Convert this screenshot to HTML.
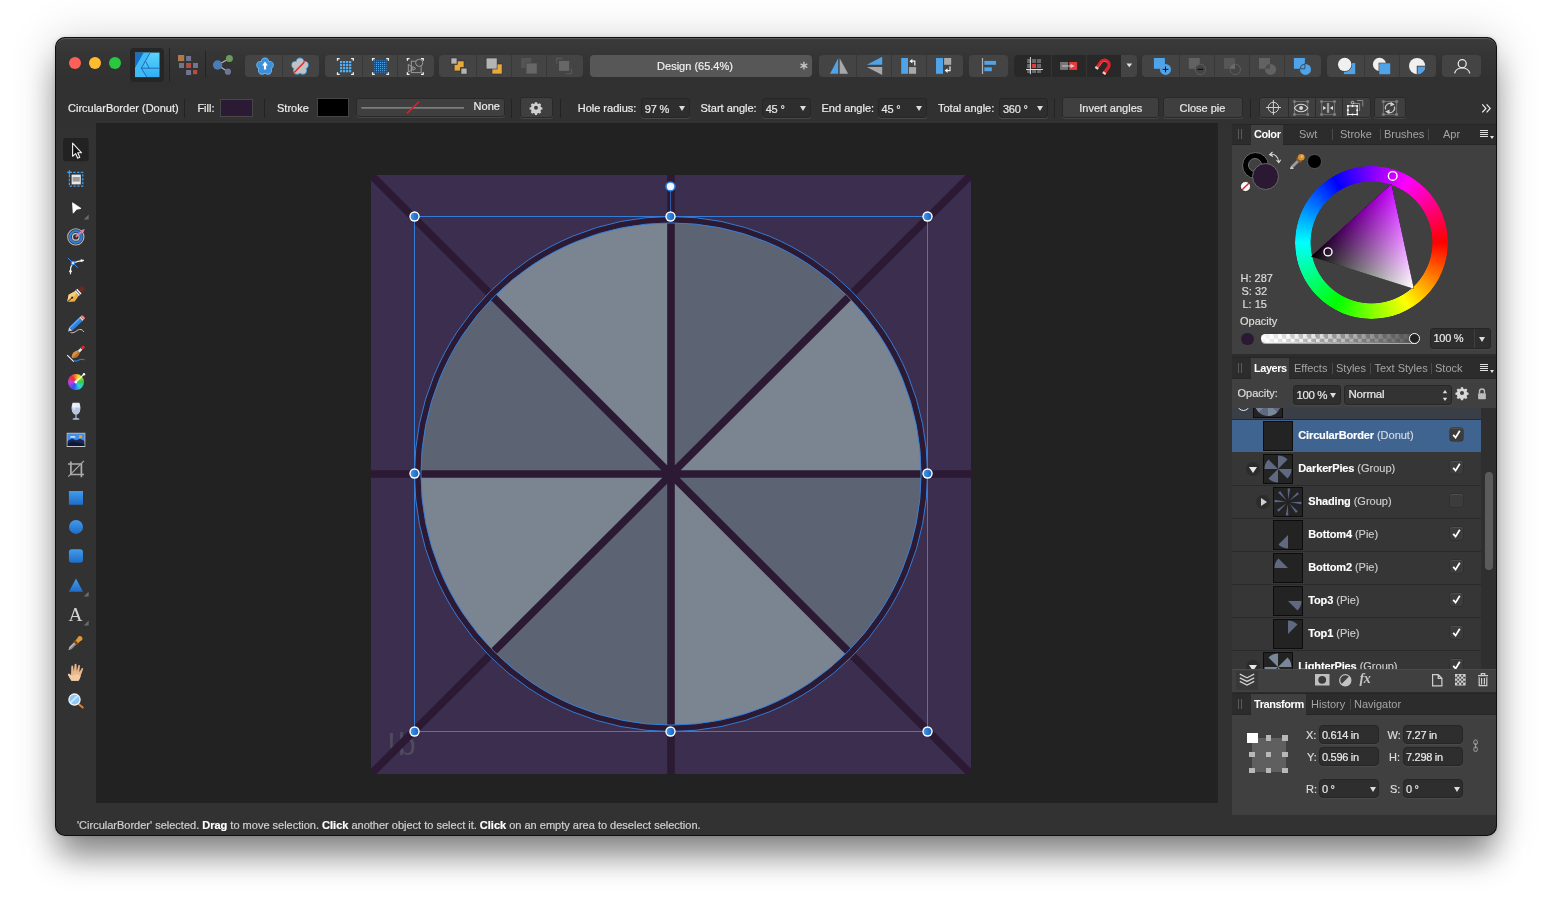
<!DOCTYPE html>
<html lang="en">
<head>
<meta charset="utf-8">
<title>Affinity Designer</title>
<style>
*{box-sizing:border-box;margin:0;padding:0}
html,body{width:1552px;height:910px;overflow:hidden;background:#fff}
body{font-family:"Liberation Sans",sans-serif;font-size:11px;color:#e6e6e6;position:relative;-webkit-font-smoothing:antialiased}
.abs,.win *{position:absolute}
.win{will-change:transform;position:absolute;left:55px;top:37px;width:1442px;height:799px;border-radius:10px;background:#323232 linear-gradient(#3b3b3b 0,#343434 22px,#303030 46px,#313131 60px,#323232 100px,#323232 100%);
 box-shadow:0 24px 32px -4px rgba(0,0,0,.42),0 3px 44px 2px rgba(0,0,0,.17),0 0 5px rgba(0,0,0,.13);overflow:hidden}
.win::after{content:"";position:absolute;left:0;top:0;right:0;bottom:0;border-radius:10px;box-shadow:inset 0 0 0 1px rgba(8,8,8,.85);pointer-events:none}
.win::before{content:"";position:absolute;left:1px;top:1px;right:1px;bottom:1px;border-radius:9px;box-shadow:inset 0 1px 0 rgba(255,255,255,.17);pointer-events:none}
.tl{width:12px;height:12px;border-radius:6px;top:20px}
.grp{top:18px;height:22px;background:#444;border-radius:4px;overflow:hidden}
.grp i{top:0;width:1px;height:22px;background:#383838}
.sep{width:1px;background:#232323}
.lbl{white-space:nowrap;line-height:14px;font-size:11px;color:#ececec;-webkit-text-stroke:.2px}
.fld{background:#2e2e2e;border:1px solid #262626;box-shadow:0 1px 0 #494949;border-radius:3px;height:20px;top:61px}
.fld span{left:2.5px;top:3px;letter-spacing:-.2px;-webkit-text-stroke:.2px;font-size:11px;line-height:14px;color:#e8e8e8;white-space:nowrap}
.fld b{right:3.5px;top:6.5px;width:0;height:0;border-left:3px solid transparent;border-right:3px solid transparent;border-top:5px solid #ddd}
.btn i{top:0;width:1px;height:19px;background:#2c2c2c}
.btn{background:#3f3f3f;border:1px solid #292929;box-shadow:0 1px 0 #454545;border-radius:3px;height:20px;top:61px;text-align:center;line-height:21px;-webkit-text-stroke:.2px;font-size:11px;color:#e8e8e8;white-space:nowrap}
svg{overflow:visible}
.tabbar{background:#2c2c2c;border-top:1px solid #262626;border-bottom:1px solid #262626}
.tab{background:#404040}
.tt{font-size:11px;line-height:14px;color:#a4a4a4;white-space:nowrap;margin-top:-1px}
.tt.on{color:#fff;font-weight:bold;letter-spacing:-.45px}
.tsep{width:1px;height:11px;background:#4a4a4a}
.grip{width:4px;height:10px;border-left:1px solid #5a5a5a;border-right:1px solid #5a5a5a}
.pbody{background:#404040}
.pmenu{width:8px;height:8px;background:repeating-linear-gradient(#e0e0e0 0 1px,transparent 1px 2px);}
.pmenu::after{content:"";position:absolute;left:10px;top:6px;border-left:2px solid transparent;border-right:2px solid transparent;border-top:3px solid #e0e0e0}
.oslider{border-radius:4.2px;background:linear-gradient(90deg,rgba(255,255,255,.9) 0,rgba(255,255,255,.55) 12%,rgba(64,64,64,.15) 35%,rgba(64,64,64,.9) 100%),repeating-conic-gradient(#b9b9b9 0 25%,#fff 0 50%) 0 0/8.4px 8.4px;box-shadow:0 1px 0 rgba(255,255,255,.55)}
.thumb{width:30px;height:30px;background:#232323;border:1px solid #0c0c0c}
.ln{font-size:11px;line-height:14px;color:#cdcdcd;white-space:nowrap;-webkit-text-stroke:.15px}
.ln b{position:static;color:#fff;font-weight:bold;letter-spacing:-.15px}
.ln span{position:static}
.cb{width:13px;height:13px;border-radius:2.5px;background:#3c3c3c;box-shadow:inset 0 1px 0 #4e4e4e,0 0 0 .5px #2b2b2b}
.cb.sel{background:#3c3c3c}
.rsep{left:0;width:249px;height:1px;background:#2a2a2a}
.disc{width:14px;height:14px;border-radius:50%;background:#2c2c2c}
.disc.down::after{content:"";position:absolute;left:3px;top:5px;border-left:4px solid transparent;border-right:4px solid transparent;border-top:6px solid #e8e8e8}
.disc.right::after{content:"";position:absolute;left:5px;top:3px;border-top:4px solid transparent;border-bottom:4px solid transparent;border-left:6px solid #d0d0d0}

</style>
</head>
<body>
<div class="win">
<svg style="left:0;top:0" width="0" height="0"><defs>
<path id="gear" d="M-1.1 -6.3h2.2l.4 1.6 1.3 .55 1.45 -.85 1.55 1.55 -.85 1.45 .55 1.3 1.6 .4v2.2l-1.6 .4 -.55 1.3 .85 1.45 -1.55 1.55 -1.45 -.85 -1.3 .55 -.4 1.6h-2.2l-.4 -1.6 -1.3 -.55 -1.45 .85 -1.55 -1.55 .85 -1.45 -.55 -1.3 -1.6 -.4v-2.2l1.6 -.4 .55 -1.3 -.85 -1.45 1.55 -1.55 1.45 .85 1.3 -.55zM0 -2.2a2.2 2.2 0 1 0 0 4.4a2.2 2.2 0 1 0 0 -4.4z" fill-rule="evenodd"/>
<g id="pin"><circle r="13" fill="#5f6a80"/><path d="M0 0L0 -13A13 13 0 0 0 -9.2 -9.2ZM0 0L13 0A13 13 0 0 0 9.2 -9.2ZM0 0L0 13A13 13 0 0 0 9.2 9.2ZM0 0L-13 0A13 13 0 0 0 -9.2 9.2Z" fill="#7a8799"/></g>
</defs></svg>
<!-- ===== title toolbar ===== -->
<div class="tl" style="left:14px;background:#fe5f57"></div>
<div class="tl" style="left:34px;background:#febc2e"></div>
<div class="tl" style="left:54px;background:#28c840"></div>
<div id="appicon" style="left:75px;top:11px;width:34px;height:34px;border-radius:4px;background:#262626"></div>
<div class="sep" style="left:114px;top:11px;height:34px"></div>
<div class="sep" style="left:150px;top:14px;height:27px"></div>

<div class="grp" style="left:190.0px;width:74.0px;"><i style="left:36.8px"></i></div>
<div class="grp" style="left:270.0px;width:109.0px;"><i style="left:36.9px"></i><i style="left:72.0px"></i></div>
<div class="grp" style="left:384.0px;width:144.0px;"><i style="left:37.0px"></i><i style="left:71.9px"></i><i style="left:106.9px"></i></div>
<div class="grp" style="left:535.0px;width:222.3px;background:#575757"><span class="lbl" style="left:0;width:210px;text-align:center;top:4px;color:#f0f0f0">Design (65.4%)</span></div>
<div class="grp" style="left:764.0px;width:144.0px;"><i style="left:37.0px"></i><i style="left:72.0px"></i><i style="left:106.9px"></i></div>
<div class="grp" style="left:914.0px;width:39.0px;"></div>
<div class="grp" style="left:959.0px;width:123.0px;"><div style="left:0;top:0;width:107px;height:22px;background:#282828"></div><i style="left:37px;background:#353535"></i><i style="left:72px;background:#353535"></i></div>
<div class="grp" style="left:1087.0px;width:179.0px;"><i style="left:36.9px"></i><i style="left:71.8px"></i><i style="left:106.9px"></i><i style="left:141.9px"></i></div>
<div class="grp" style="left:1272.0px;width:109.0px;"><i style="left:36.7px"></i><i style="left:71.9px"></i></div>
<div class="grp" style="left:1387.0px;width:39.0px;"></div>

<!-- ===== context toolbar ===== -->
<span class="lbl" style="left:13.0px;top:63.8px">CircularBorder (Donut)</span>
<div class="sep" style="left:128.8px;top:62.0px;height:18.5px"></div>
<span class="lbl" style="left:142.4px;top:63.8px">Fill:</span>
<div style="left:164.6px;top:61.5px;width:33px;height:18.5px;background:#2b1a33;border:1px solid #474747"></div>
<div class="sep" style="left:209.0px;top:62.0px;height:18.5px"></div>
<span class="lbl" style="left:222.0px;top:63.8px">Stroke</span>
<div style="left:262.0px;top:61.3px;width:32px;height:18.7px;background:#000;border:1px solid #454545"></div>
<div class="btn" style="left:300.5px;top:61.3px;width:149px;height:18.7px"></div>
<span class="lbl" style="left:418.6px;top:62.0px">None</span>
<div class="sep" style="left:456.1px;top:62.0px;height:18.5px"></div>
<div class="btn" style="left:464.5px;top:60px;width:33px;height:20.5px"></div>
<div class="sep" style="left:505.0px;top:62.0px;height:18.5px"></div>
<span class="lbl" style="left:522.7px;top:63.8px">Hole radius:</span>
<div class="fld" style="left:586.3px;top:61.3px;width:48.5px;height:19.5px"><span>97 %</span><b></b></div>
<span class="lbl" style="left:645.4px;top:63.8px">Start angle:</span>
<div class="fld" style="left:707.2px;top:61.3px;width:48.6px;height:19.5px"><span>45 °</span><b></b></div>
<span class="lbl" style="left:766.5px;top:63.8px">End angle:</span>
<div class="fld" style="left:823.0px;top:61.3px;width:48.6px;height:19.5px"><span>45 °</span><b></b></div>
<span class="lbl" style="left:883.0px;top:63.8px">Total angle:</span>
<div class="fld" style="left:944.4px;top:61.3px;width:48.4px;height:19.5px"><span>360 °</span><b></b></div>
<div class="sep" style="left:999.2px;top:62.0px;height:18.5px"></div>
<div class="btn" style="left:1007.3px;top:60px;width:97px;height:20.5px">Invert angles</div>
<div class="btn" style="left:1107.5px;top:60px;width:80px;height:20.5px">Close pie</div>
<div class="sep" style="left:1195.2px;top:62.0px;height:18.5px"></div>
<div class="btn" style="left:1203.5px;top:60px;width:112px;height:20.5px"><i style="left:28px"></i><i style="left:55px"></i><i style="left:82px"></i></div>
<div class="btn" style="left:1318.8px;top:60px;width:32.7px;height:20.5px"></div>
<svg id="topicons" style="left:0;top:0" width="1442" height="90" viewBox="55 37 1442 90">
<g transform="translate(135 52.6)"><defs><linearGradient id="ag" x1="0" y1="0" x2="0" y2="1"><stop offset="0" stop-color="#5bd3fb"/><stop offset="1" stop-color="#2fb0f3"/></linearGradient><clipPath id="ac"><rect width="24.5" height="24.5"/></clipPath></defs><rect width="24.5" height="24.5" fill="url(#ag)"/><g clip-path="url(#ac)"><path d="M0 0H9L0 15.6Z" fill="#1a6ec6"/><path d="M9 0H15.2L6.3 15.6L11.8 24.5H0V15.6Z" fill="#3fbcf7"/><path d="M15.2 0L6.3 15.6L11.8 24.5M6.3 15.6H24.5M10.6 8.8L14.2 15.6" fill="none" stroke="#1c55a8" stroke-width=".8"/></g></g>
<rect x="178" y="55" width="6.2" height="6.2" fill="#b07a48"/>
<rect x="186.1" y="56" width="5" height="5" fill="#70768f"/>
<rect x="179" y="63" width="5" height="5" fill="#70768f"/>
<rect x="186.1" y="63" width="5" height="5" fill="#b84c3e"/>
<rect x="193" y="63" width="5" height="5" fill="#70768f"/>
<rect x="186.1" y="70" width="5" height="5" fill="#70768f"/>
<rect x="193" y="70" width="4.2" height="4.2" fill="#b84c3e"/>
<path d="M217.6 65L229.4 58.5M217.6 65L227.9 71.7" stroke="#b8b8b8" stroke-width="1.2"/><circle cx="217.6" cy="65" r="4.7" fill="#4b7db4"/><circle cx="229.4" cy="58.5" r="3.5" fill="#6c9a5c"/><circle cx="227.9" cy="71.7" r="3.1" fill="#70769a"/>
<g transform="translate(265 66)" fill="#3d8fd9" stroke="#6dbaf2" stroke-width="1.7" stroke-linejoin="round"><circle cx="0.00" cy="-4.30" r="3.3"/><circle cx="4.66" cy="-0.91" r="3.3"/><circle cx="2.88" cy="4.56" r="3.3"/><circle cx="-2.88" cy="4.56" r="3.3"/><circle cx="-4.66" cy="-0.91" r="3.3"/></g><g transform="translate(265 66)" fill="#3d8fd9"><circle cx="0.00" cy="-4.30" r="3.3"/><circle cx="4.66" cy="-0.91" r="3.3"/><circle cx="2.88" cy="4.56" r="3.3"/><circle cx="-2.88" cy="4.56" r="3.3"/><circle cx="-4.66" cy="-0.91" r="3.3"/><circle cy=".6" r="4.2"/></g>
<path d="M265 61.6L267.9 65.6H266.1V69.6H263.9V65.6H262.1Z" fill="#fff"/>
<g transform="translate(300 66)" fill="#c2c2c2" stroke="#3f9ce2" stroke-width="1.7" stroke-linejoin="round"><circle cx="0.00" cy="-4.30" r="3.3"/><circle cx="4.66" cy="-0.91" r="3.3"/><circle cx="2.88" cy="4.56" r="3.3"/><circle cx="-2.88" cy="4.56" r="3.3"/><circle cx="-4.66" cy="-0.91" r="3.3"/></g><g transform="translate(300 66)" fill="#c2c2c2"><circle cx="0.00" cy="-4.30" r="3.3"/><circle cx="4.66" cy="-0.91" r="3.3"/><circle cx="2.88" cy="4.56" r="3.3"/><circle cx="-2.88" cy="4.56" r="3.3"/><circle cx="-4.66" cy="-0.91" r="3.3"/><circle cy=".6" r="4.2"/></g>
<path d="M294.2 72.4L304.4 61.9" stroke="#e8262c" stroke-width="1.5"/>
<path d="M339.7 58.6H337.5V60.800000000000004M339.7 74.4H337.5V72.2M351.09999999999997 58.6H353.29999999999995V60.800000000000004M351.09999999999997 74.4H353.29999999999995V72.2" fill="none" stroke="#f2f2f2" stroke-width="1.3"/>
<rect x="340.00" y="61.00" width="2.2" height="2.2" fill="#4fb2ff"/>
<rect x="340.00" y="64.02" width="2.2" height="2.2" fill="#4fb2ff"/>
<rect x="340.00" y="67.04" width="2.2" height="2.2" fill="#4fb2ff"/>
<rect x="340.00" y="70.06" width="2.2" height="2.2" fill="#4fb2ff"/>
<rect x="343.02" y="61.00" width="2.2" height="2.2" fill="#4fb2ff"/>
<rect x="343.02" y="64.02" width="2.2" height="2.2" fill="#4fb2ff"/>
<rect x="343.02" y="67.04" width="2.2" height="2.2" fill="#4fb2ff"/>
<rect x="343.02" y="70.06" width="2.2" height="2.2" fill="#4fb2ff"/>
<rect x="346.04" y="61.00" width="2.2" height="2.2" fill="#4fb2ff"/>
<rect x="346.04" y="64.02" width="2.2" height="2.2" fill="#4fb2ff"/>
<rect x="346.04" y="67.04" width="2.2" height="2.2" fill="#4fb2ff"/>
<rect x="346.04" y="70.06" width="2.2" height="2.2" fill="#4fb2ff"/>
<rect x="349.06" y="61.00" width="2.2" height="2.2" fill="#4fb2ff"/>
<rect x="349.06" y="64.02" width="2.2" height="2.2" fill="#4fb2ff"/>
<rect x="349.06" y="67.04" width="2.2" height="2.2" fill="#4fb2ff"/>
<rect x="349.06" y="70.06" width="2.2" height="2.2" fill="#4fb2ff"/>
<path d="M374.8 58.6H372.6V60.800000000000004M374.8 74.4H372.6V72.2M386.2 58.6H388.4V60.800000000000004M386.2 74.4H388.4V72.2" fill="none" stroke="#f2f2f2" stroke-width="1.3"/>
<rect x="374.00" y="60.00" width="1" height="1" fill="#3a78b5"/>
<rect x="374.00" y="62.03" width="1" height="1" fill="#3a78b5"/>
<rect x="374.00" y="64.06" width="1" height="1" fill="#3a78b5"/>
<rect x="374.00" y="66.09" width="1" height="1" fill="#3a78b5"/>
<rect x="374.00" y="68.12" width="1" height="1" fill="#3a78b5"/>
<rect x="374.00" y="70.15" width="1" height="1" fill="#3a78b5"/>
<rect x="374.00" y="72.18" width="1" height="1" fill="#3a78b5"/>
<rect x="376.03" y="60.00" width="1" height="1" fill="#3a78b5"/>
<rect x="376.03" y="62.03" width="1" height="1" fill="#5ab4ff"/>
<rect x="376.03" y="64.06" width="1" height="1" fill="#5ab4ff"/>
<rect x="376.03" y="66.09" width="1" height="1" fill="#5ab4ff"/>
<rect x="376.03" y="68.12" width="1" height="1" fill="#5ab4ff"/>
<rect x="376.03" y="70.15" width="1" height="1" fill="#5ab4ff"/>
<rect x="376.03" y="72.18" width="1" height="1" fill="#3a78b5"/>
<rect x="378.06" y="60.00" width="1" height="1" fill="#3a78b5"/>
<rect x="378.06" y="62.03" width="1" height="1" fill="#5ab4ff"/>
<rect x="378.06" y="64.06" width="1" height="1" fill="#5ab4ff"/>
<rect x="378.06" y="66.09" width="1" height="1" fill="#5ab4ff"/>
<rect x="378.06" y="68.12" width="1" height="1" fill="#5ab4ff"/>
<rect x="378.06" y="70.15" width="1" height="1" fill="#5ab4ff"/>
<rect x="378.06" y="72.18" width="1" height="1" fill="#3a78b5"/>
<rect x="380.09" y="60.00" width="1" height="1" fill="#3a78b5"/>
<rect x="380.09" y="62.03" width="1" height="1" fill="#5ab4ff"/>
<rect x="380.09" y="64.06" width="1" height="1" fill="#5ab4ff"/>
<rect x="380.09" y="66.09" width="1" height="1" fill="#5ab4ff"/>
<rect x="380.09" y="68.12" width="1" height="1" fill="#5ab4ff"/>
<rect x="380.09" y="70.15" width="1" height="1" fill="#5ab4ff"/>
<rect x="380.09" y="72.18" width="1" height="1" fill="#3a78b5"/>
<rect x="382.12" y="60.00" width="1" height="1" fill="#3a78b5"/>
<rect x="382.12" y="62.03" width="1" height="1" fill="#5ab4ff"/>
<rect x="382.12" y="64.06" width="1" height="1" fill="#5ab4ff"/>
<rect x="382.12" y="66.09" width="1" height="1" fill="#5ab4ff"/>
<rect x="382.12" y="68.12" width="1" height="1" fill="#5ab4ff"/>
<rect x="382.12" y="70.15" width="1" height="1" fill="#5ab4ff"/>
<rect x="382.12" y="72.18" width="1" height="1" fill="#3a78b5"/>
<rect x="384.15" y="60.00" width="1" height="1" fill="#3a78b5"/>
<rect x="384.15" y="62.03" width="1" height="1" fill="#5ab4ff"/>
<rect x="384.15" y="64.06" width="1" height="1" fill="#5ab4ff"/>
<rect x="384.15" y="66.09" width="1" height="1" fill="#5ab4ff"/>
<rect x="384.15" y="68.12" width="1" height="1" fill="#5ab4ff"/>
<rect x="384.15" y="70.15" width="1" height="1" fill="#5ab4ff"/>
<rect x="384.15" y="72.18" width="1" height="1" fill="#3a78b5"/>
<rect x="386.18" y="60.00" width="1" height="1" fill="#3a78b5"/>
<rect x="386.18" y="62.03" width="1" height="1" fill="#3a78b5"/>
<rect x="386.18" y="64.06" width="1" height="1" fill="#3a78b5"/>
<rect x="386.18" y="66.09" width="1" height="1" fill="#3a78b5"/>
<rect x="386.18" y="68.12" width="1" height="1" fill="#3a78b5"/>
<rect x="386.18" y="70.15" width="1" height="1" fill="#3a78b5"/>
<rect x="386.18" y="72.18" width="1" height="1" fill="#3a78b5"/>
<path d="M409.6 58.6H407.40000000000003V60.800000000000004M409.6 74.4H407.40000000000003V72.2M421.0 58.6H423.2V60.800000000000004M421.0 74.4H423.2V72.2" fill="none" stroke="#f2f2f2" stroke-width="1.3"/>
<g fill="none" stroke="#9a9a9a" stroke-width="1"><rect x="411.3" y="61.2" width="9.8" height="11.4"/><circle cx="419.2" cy="62.8" r="3.6" fill="#444"/><path d="M408.3 64.5V72L411.3 70.2V66.3ZM412.8 66.6V70.4L415.8 68.5Z"/></g>
<path d="M457.2 60.9H464V67.6H460.4V70.9H454.2V64.4H457.2Z" fill="#e8a83a" stroke="#2e2e2e" stroke-width=".6"/><rect x="451" y="58" width="6" height="6" fill="#b4b4b4" stroke="#2e2e2e" stroke-width=".6"/><rect x="461" y="68.1" width="6" height="6" fill="#b4b4b4" stroke="#2e2e2e" stroke-width=".6"/>
<rect x="492" y="64" width="10.1" height="10" fill="#e8a83a" stroke="#2e2e2e" stroke-width=".6"/><rect x="486.1" y="58" width="11" height="11" fill="#b4b4b4" stroke="#2e2e2e" stroke-width=".6"/>
<rect x="521.2" y="58" width="10" height="10" fill="#545454"/><rect x="526" y="63" width="11.2" height="11" fill="#676767" stroke="#444" stroke-width=".8"/>
<path d="M556.7 64V58.5H562.5M571.5 68.5V73.7H566" fill="none" stroke="#575757" stroke-width="1.3"/><rect x="559" y="60.9" width="10.2" height="10" fill="#676767"/>
<g stroke="#c4c4c4" stroke-width="1.4" stroke-linecap="butt"><path d="M803.9 61.8V69.6M800.5 63.8L807.3 67.6M807.3 63.8L800.5 67.6"/></g>
<path d="M830 73.8H838.2V58.3Z" fill="#4fa3e8"/><path d="M839.7 58.3V73.8H848.1Z" fill="#a8a8a8"/>
<path d="M866.8 64.8H882.2V56.8Z" fill="#4fa3e8"/><path d="M866.8 67.1H882.2V75.1Z" fill="#a8a8a8"/>
<rect x="901.2" y="58" width="6.8" height="15.8" fill="#4fa3e8"/><rect x="908.9" y="67.1" width="7.2" height="6.7" fill="#a8a8a8"/><path d="M914.8 65.6V61.2H910.6" fill="none" stroke="#f2f2f2" stroke-width="1.2"/><path d="M909.4 61.2L912.4 58.8V63.6Z" fill="#f2f2f2"/>
<rect x="936" y="58" width="7" height="15.8" fill="#4fa3e8"/><rect x="944.1" y="58" width="7.1" height="6.8" fill="#a8a8a8"/><path d="M950 66.2V70.6H946.4" fill="none" stroke="#f2f2f2" stroke-width="1.2"/><path d="M944.6 70.6L947.6 68.2V73Z" fill="#f2f2f2"/>
<rect x="981.9" y="58" width="1.2" height="16" fill="#b0b0b0"/><rect x="984.3" y="60.9" width="11.7" height="3.9" fill="#4fa3e8"/><rect x="984.3" y="67.3" width="7.5" height="3.9" fill="#4fa3e8"/>
<rect x="1027.1" y="59.0" width="4" height="4" fill="#6a6a6a"/>
<rect x="1027.1" y="64.0" width="4" height="4" fill="#6a6a6a"/>
<rect x="1027.1" y="69.0" width="4" height="4" fill="#6a6a6a"/>
<rect x="1032.1" y="59.0" width="4" height="4" fill="#6a6a6a"/>
<rect x="1032.1" y="64.0" width="4" height="4" fill="#e83a3a"/>
<rect x="1032.1" y="69.0" width="4" height="4" fill="#6a6a6a"/>
<rect x="1037.1" y="59.0" width="4" height="4" fill="#6a6a6a"/>
<rect x="1037.1" y="64.0" width="4" height="4" fill="#6a6a6a"/>
<rect x="1037.1" y="69.0" width="4" height="4" fill="#6a6a6a"/>
<path d="M1030.4 57V74.2M1026 69.5H1043" stroke="#e8e8e8" stroke-width=".9"/>
<rect x="1060.1" y="62" width="7.9" height="7.9" fill="#777"/><rect x="1069.2" y="62" width="7.9" height="7.9" fill="#e83a3a"/><path d="M1062 66H1071" stroke="#d4d4d4" stroke-width=".9"/><path d="M1070.6 63.9L1074.8 66L1070.6 68.1Z" fill="#d4d4d4"/>
<g transform="translate(1104.2 65.3) rotate(35)"><path d="M-4.6 7.5V-0.5A4.6 4.6 0 0 1 4.6 -0.5V7.5" fill="none" stroke="#e0232b" stroke-width="3.4"/><path d="M-4.6 7.5V5.3M4.6 7.5V5.3" stroke="#d8d8d8" stroke-width="3.4"/><path d="M-3.6 5V-0.5A3.6 3.6 0 0 1 .5 -4" fill="none" stroke="#ff6a6a" stroke-width=".8" opacity=".7"/></g>
<path d="M1126.4 63.6H1132.2L1129.3 67.3Z" fill="#e0e0e0"/>
<rect x="1153.9" y="58" width="11" height="10.8" fill="#4fa3e8"/><circle cx="1165.5" cy="69.4" r="5.5" fill="#4fa3e8"/><path d="M1162.6 69.4H1168.4M1165.5 66.5V72.3" stroke="#111" stroke-width="1"/>
<rect x="1188.8" y="58" width="11" height="10.8" fill="#626262"/><circle cx="1200.4" cy="69.4" r="5.2" fill="#444" stroke="#5e5e5e" stroke-width="1"/><path d="M1197.6 69.4H1203.2" stroke="#111" stroke-width="1.1"/>
<rect x="1224" y="58" width="11" height="10.8" fill="#565656"/><circle cx="1235.3" cy="69.4" r="5.2" fill="none" stroke="#5e5e5e" stroke-width="1"/><path d="M1235 63.9V68.8H1230.2A5.2 5.2 0 0 1 1235 63.9Z" fill="#6a6a6a"/>
<circle cx="1270.6" cy="69.4" r="5.5" fill="#626262"/><rect x="1259" y="58" width="11" height="10.8" fill="#626262"/><path d="M1270 63.9V68.8H1265.1A5.5 5.5 0 0 1 1270 63.9Z" fill="#4c4c4c"/>
<rect x="1293.9" y="58" width="11" height="10.8" fill="#4fa3e8"/><circle cx="1305.5" cy="69.4" r="5.5" fill="#4fa3e8"/><path d="M1304.9 63.9V68.8H1300A5.5 5.5 0 0 1 1304.9 63.9Z" fill="#4fa3e8" stroke="#2c3a4a" stroke-width=".8"/>
<rect x="1343.9" y="63.1" width="11.3" height="11" fill="#4fa3e8"/><circle cx="1344.7" cy="64.4" r="7.4" fill="#444"/><circle cx="1344.7" cy="64.4" r="6.7" fill="#f0f0f0"/>
<circle cx="1379.5" cy="64.4" r="6.6" fill="#f0f0f0"/><rect x="1378.6" y="62.7" width="11.9" height="11.8" fill="#444"/><rect x="1379.2" y="63.3" width="11" height="10.9" fill="#4fa3e8"/>
<circle cx="1417.1" cy="66.1" r="8.1" fill="#f0f0f0"/><path d="M1417.6 66.6H1425.2A8.1 8.1 0 0 1 1417.6 74.2Z" fill="#4fa3e8" stroke="#444" stroke-width=".1"/><path d="M1417.3 74.5V66.3H1425.5" fill="none" stroke="#444" stroke-width="1.1"/>
<path d="M1417.9 66.9H1425.2A8.1 8.1 0 0 1 1417.9 74.2Z" fill="#4fa3e8"/>
<g fill="none" stroke="#ececec" stroke-width="1.25"><circle cx="1462.2" cy="63.7" r="4"/><path d="M1454.6 73.4A7.7 6.6 0 0 1 1469.8 73.4"/></g>
<path d="M361.3 107.9H464.1" stroke="#7c7c7c" stroke-width="1.6"/><path d="M406.9 113.4L419 101.8" stroke="#d8222c" stroke-width="1.5"/>
<use href="#gear" transform="translate(536 107.8) scale(.9)" fill="#cfcfcf"/>
<g fill="none" stroke="#cfcfcf" stroke-width="1"><circle cx="1273.4" cy="107.5" r="5.2"/><path d="M1273.4 100V115M1266 107.5H1281"/></g>
<rect x="1294.5" y="101.5" width="13.200000000000045" height="12.900000000000006" fill="none" stroke="#6e6e6e" stroke-width="1"/><circle cx="1294.5" cy="101.5" r="1.55" fill="#7c7c7c"/><circle cx="1294.5" cy="114.4" r="1.55" fill="#7c7c7c"/><circle cx="1307.7" cy="101.5" r="1.55" fill="#7c7c7c"/><circle cx="1307.7" cy="114.4" r="1.55" fill="#7c7c7c"/>
<path d="M1294.4 108C1297.5 103 1304.7 103 1307.8 108C1304.7 113 1297.5 113 1294.4 108Z" fill="#444" stroke="#d8d8d8" stroke-width="1.1"/><circle cx="1301.1" cy="108" r="1.9" fill="#d8d8d8"/>
<rect x="1321.6" y="101.5" width="12.900000000000091" height="12.900000000000006" fill="none" stroke="#6e6e6e" stroke-width="1"/><circle cx="1321.6" cy="101.5" r="1.55" fill="#7c7c7c"/><circle cx="1321.6" cy="114.4" r="1.55" fill="#7c7c7c"/><circle cx="1334.5" cy="101.5" r="1.55" fill="#7c7c7c"/><circle cx="1334.5" cy="114.4" r="1.55" fill="#7c7c7c"/>
<rect x="1326.9" y="103" width="2.3" height="9.8" fill="#9c9c9c"/><path d="M1323.1 106V110L1326.2 108ZM1333 106V110L1329.9 108Z" fill="#e0e0e0"/>
<g fill="none" stroke="#8a8a8a" stroke-width="1"><path d="M1357.2 100.5H1362.8V106.4M1352.5 103.5H1359.6V111"/></g><circle cx="1352.5" cy="102.6" r="1.3" fill="none" stroke="#ddd" stroke-width=".8"/><rect x="1347.9" y="105.9" width="9.3" height="8.6" fill="#444" stroke="#f4f4f4" stroke-width="1"/>
<circle cx="1347.9" cy="105.9" r="1" fill="#fff"/>
<circle cx="1347.9" cy="110.2" r="1" fill="#fff"/>
<circle cx="1347.9" cy="114.5" r="1" fill="#fff"/>
<circle cx="1352.55" cy="105.9" r="1" fill="#fff"/>
<circle cx="1352.55" cy="114.5" r="1" fill="#fff"/>
<circle cx="1357.2" cy="105.9" r="1" fill="#fff"/>
<circle cx="1357.2" cy="110.2" r="1" fill="#fff"/>
<circle cx="1357.2" cy="114.5" r="1" fill="#fff"/>
<rect x="1383.4" y="101.5" width="13.199999999999818" height="12.900000000000006" fill="none" stroke="#6e6e6e" stroke-width="1"/><circle cx="1383.4" cy="101.5" r="1.55" fill="#7c7c7c"/><circle cx="1383.4" cy="114.4" r="1.55" fill="#7c7c7c"/><circle cx="1396.6" cy="101.5" r="1.55" fill="#7c7c7c"/><circle cx="1396.6" cy="114.4" r="1.55" fill="#7c7c7c"/>
<g fill="none" stroke="#c4c4c4" stroke-width="1.15"><path d="M1385.6 109.5A4.6 4.6 0 0 1 1392.5 104.2"/><path d="M1394.4 106.5A4.6 4.6 0 0 1 1387.5 111.8"/></g><path d="M1390.6 101.8L1394.8 104.6L1390.4 106.6Z" fill="#cfcfcf"/><path d="M1389.4 114.2L1385.2 111.4L1389.6 109.4Z" fill="#cfcfcf"/>
<path d="M1482.3 104.4L1485.9 108.4L1482.3 112.4M1486.6 104.4L1490.2 108.4L1486.6 112.4" fill="none" stroke="#f0f0f0" stroke-width="1.2"/>
</svg>

<!-- ===== left tools ===== -->
<div style="left:13.1px;top:336.9px;width:15.8px;height:15.8px;border-radius:50%;background:conic-gradient(from -35deg,#f03030,#f0e030,#30d040,#30d0e0,#3050f0,#c040e0,#f03030)"></div>
<svg id="lefticons" style="left:0;top:86px" width="42" height="680" viewBox="55 123 42 680">
<rect x="63" y="138" width="25.7" height="23.3" rx="3" fill="#222"/>
<path d="M72.6 143.1V156.3L75.6 153.6L77.7 158.2L79.8 157.2L77.7 152.8H81.6Z" fill="#111" stroke="#f0f0f0" stroke-width="1.1" stroke-linejoin="round"/>
<rect x="69.4" y="172.4" width="13.4" height="13.8" fill="none" stroke="#3fa0f0" stroke-width="1.2" stroke-dasharray="2.4 1.4"/><path d="M67.2 172.4H71.8M69.4 170.2V174.8" stroke="#3fa0f0" stroke-width="1.2"/><rect x="71.6" y="174.6" width="9.2" height="9.8" fill="#e8e8e8"/><rect x="72.6" y="177" width="7.2" height="4.6" fill="#9a9a9a"/>
<path d="M72.5 202.8L81 208.4L76.6 209.3L73.2 213.2Z" fill="#fff" stroke="#fff" stroke-width=".8" stroke-linejoin="round"/>
<path d="M88.7 214.4V219.4H83.7Z" fill="#6a6a6a"/>
<g fill="none"><circle cx="75.8" cy="236.9" r="8.1" stroke="#b8b8b8" stroke-width="1.1"/><circle cx="75.8" cy="236.9" r="5.8" stroke="#2f7fd8" stroke-width="2.4"/><circle cx="75.8" cy="236.9" r="3.3" stroke="#c8c8c8" stroke-width="1.2"/></g><path d="M75.8 236.9L83.5 230.2" stroke="#f07aa8" stroke-width="1.6"/><path d="M84.8 229L81.2 230.2L83.4 232.6Z" fill="#f07aa8"/>
<path d="M70.5 274.2V270C70.5 265 73 262.5 78 261.4L84 260.4" fill="none" stroke="#f0f0f0" stroke-width="1.1"/><circle cx="70.5" cy="271.3" r="1.3" fill="#f0f0f0"/><circle cx="81.6" cy="260.6" r="1.3" fill="#f0f0f0"/><path d="M67.9 257.9L77.8 267.8" stroke="#3a8ae8" stroke-width="1"/><rect x="71.3" y="261.3" width="3.4" height="3.4" fill="#cfe6ff" stroke="#2f80e0" stroke-width="1"/>
<g transform="translate(67.2 302.1) rotate(-42)"><path d="M0 0L6 -4.5L12.5 -3V3L6 4.5Z" fill="#f0b04a"/><path d="M0 0L6 -4.500L12.5 -3V0Z" fill="#f8cf7e"/><path d="M0 0H6.5" stroke="#2a1a0a" stroke-width=".9"/><circle cx="6.8" cy="0" r="1" fill="#2a1a0a"/><rect x="12.7" y="-3.200" width="1.6" height="6.400" fill="#f4f4f4"/><rect x="15" y="-3.200" width="1.4" height="6.400" fill="#f4f4f4"/><path d="M17 -2.600H21.5Q23 0 21.5 2.600H17Z" fill="#6a2a1c"/></g>
<g transform="translate(67.9 331.6) rotate(-43.5)"><path d="M0 0L4 -2.3V2.3Z" fill="#f0c890"/><path d="M0 0L1.6 -.9V.9Z" fill="#2f80e0"/><rect x="4" y="-2.3" width="14" height="4.6" fill="#2f80e0"/><rect x="4" y="-2.3" width="14" height="1.6" fill="#5aa4f4"/><rect x="18" y="-2.3" width="1.6" height="4.6" fill="#d8d8d8"/><path d="M19.6 -2.3H21.5Q22.8 0 21.5 2.3H19.6Z" fill="#f08a80"/></g><path d="M70.5 332.5C74 334 76.5 330 79.5 329.5C82 329.2 82.8 330.6 84 332" fill="none" stroke="#d8d8d8" stroke-width=".9"/>
<g transform="translate(72 358) rotate(-44)"><path d="M0 0C2 -3.6 7 -3.4 9.4 -1.4V1.4C7 3.4 2 3.6 0 0Z" fill="#b8722e"/><path d="M0 0C2 -3.6 7 -3.4 9.4 -1.4V0Z" fill="#d89248"/><rect x="9.4" y="-1.3" width="3.8" height="2.6" fill="#e4e4e4"/><path d="M13.2 -1.5H16.6Q17.8 0 16.6 1.5H13.2Z" fill="#e02828"/></g><path d="M67.200 355.200L73.800 361.700" stroke="#f0f0f0" stroke-width="1.100"/><path d="M73.8 360.600C76 362 77.5 361 79.5 359.700C81.5 358.600 82.800 359.200 84.600 359.800" fill="none" stroke="#2f80e0" stroke-width="1.1"/>

<path d="M75.8 382L84 374.2" stroke="#fff" stroke-width="1.1"/><circle cx="75.8" cy="382" r="1.4" fill="#fff"/><circle cx="84" cy="374.2" r="1.2" fill="#fff"/>
<path d="M72.600 402.800H79.400C80.600 406 80.800 409.500 79.600 412C78.800 413.700 77.300 414.600 76 414.600C74.700 414.600 73.200 413.700 72.400 412C71.200 409.500 71.400 406 72.600 402.800Z" fill="#e6ecf6"/><path d="M72.300 407.500H79.700C80.200 409.500 79.900 411 79.300 412C78.600 413.400 77.200 414 76 414C74.800 414 73.400 413.400 72.700 412C72.100 411 71.800 409.500 72.300 407.500Z" fill="#b4c6e2"/><path d="M74.200 404V410" stroke="#fff" stroke-width="1" opacity=".8"/><rect x="75.500" y="414.400" width="1" height="4.200" fill="#d4deee"/><ellipse cx="76" cy="418.900" rx="3.400" ry=".900" fill="#a8c0e4"/>
<rect x="67.2" y="433.3" width="17.6" height="13.2" fill="#2a66c8" stroke="#c8c8c8" stroke-width="1"/><rect x="67.7" y="433.8" width="16.6" height="6" fill="#3f8fe8"/><path d="M67.7 441L72 438.5L76 440.5L80 438.8L84.3 441V446H67.700Z" fill="#1a2858"/><path d="M67.7 443.5L73 441.5L84.3 444V446H67.700Z" fill="#101838"/><circle cx="80.5" cy="436.7" r="1.7" fill="#f0a020"/><path d="M70 437.6H75.500C75.500 436.200 73.500 435.800 72.800 436.600C72 436 70.200 436.400 70 437.600Z" fill="#fff"/>
<path d="M70.9 461.5V474.500H84M68 464H81.400V477.200" fill="none" stroke="#acacac" stroke-width="1.700"/><path d="M68.300 476.600L83.900 460.800" stroke="#acacac" stroke-width="1.100"/>
<defs><linearGradient id="sg" x1="0" y1="0" x2="0" y2="1"><stop offset="0" stop-color="#429cec"/><stop offset="1" stop-color="#1f6cc6"/></linearGradient></defs>
<rect x="68.9" y="491" width="14.1" height="13.8" fill="url(#sg)"/>
<circle cx="76" cy="526.9" r="7" fill="url(#sg)"/>
<rect x="68.9" y="549.300" width="14.1" height="13.4" rx="3" fill="url(#sg)"/>
<path d="M68.900 591.800H83L76 578.600Z" fill="url(#sg)"/>
<path d="M88.7 591.6V596.6H83.7Z" fill="#6a6a6a"/>
<path d="M88.7 620.5V625.5H83.7Z" fill="#6a6a6a"/>
<g transform="translate(68.4 650.200) rotate(-45)"><path d="M0 0L3 -1.500H10V1.500H3Z" fill="#8c8c8c"/><path d="M0 0L3 -1.500H10V0Z" fill="#b4b4b4"/><rect x="9.500" y="-2.600" width="2.400" height="5.200" fill="#7a4a1c"/><path d="M11.900 -2H14.500Q18 -3.800 19 0Q18 3.800 14.500 2H11.900Z" fill="#e0963a"/></g>
<path d="M71.500 680.800C70 678 68.500 676 67.900 674.200C68.500 673.200 69.800 673.600 71 675.200L71.300 666.500C71.500 665.300 73 665.300 73.200 666.500L73.900 671.500L74.600 664.600C74.800 663.400 76.300 663.400 76.500 664.600L76.800 671.500L78.300 665.600C78.600 664.500 80 664.800 79.900 666L79.300 672.300L81.600 668.500C82.200 667.600 83.400 668.200 83 669.300L80.800 675.500C80.300 677.800 79.500 679.500 78.500 680.800Z" fill="#e8b88c"/><path d="M71.500 680.800C70 678 68.500 676 67.900 674.200C68.500 673.200 69.800 673.600 71 675.200L72 676.500C74 673.500 78 673.500 80.600 676C80.200 677.800 79.500 679.500 78.500 680.800Z" fill="#f2cca4"/>
<path d="M78.500 704L83.400 708" stroke="#e0823a" stroke-width="1.800"/><circle cx="74.500" cy="699.600" r="5.600" fill="#8ec8f8" stroke="#f4f4f4" stroke-width="1.300"/><path d="M70.600 702.500L77.800 695.800" stroke="#d8eeff" stroke-width="2" opacity=".8"/>
</svg>
<span style="left:13.5px;top:567px;font-family:'Liberation Serif',serif;font-size:19.5px;line-height:22px;color:#d4d4d4">A</span>
<!-- ===== canvas ===== -->
<div id="canvas" style="left:41px;top:86px;width:1122px;height:679.7px;background:#222;overflow:hidden">
<svg style="left:0;top:0" width="1122" height="679" viewBox="96 123 1122 679">
<defs><clipPath id="ab"><rect x="371" y="175" width="600" height="599"/></clipPath>
<linearGradient id="hg" x1="0" x2="1" y1="0" y2="0"><stop offset="0" stop-color="#3f97e8"/><stop offset="1" stop-color="#1a62c4"/></linearGradient>
<g id="h"><circle r="5.6" fill="#000" opacity=".18"/><circle r="5.2" fill="#fff"/><circle r="3.8" fill="url(#hg)"/></g></defs>
<rect x="371" y="175" width="600" height="599" fill="#3b2e4e"/>
<g clip-path="url(#ab)">
<path d="M671 474L671.00 222.00A252.00 252.00 0 0 1 849.19 295.81Z" fill="#5c6473"/>
<path d="M671 474L849.19 295.81A252.00 252.00 0 0 1 923.00 474.00Z" fill="#7a8591"/>
<path d="M671 474L923.00 474.00A252.00 252.00 0 0 1 849.19 652.19Z" fill="#5c6473"/>
<path d="M671 474L849.19 652.19A252.00 252.00 0 0 1 671.00 726.00Z" fill="#7a8591"/>
<path d="M671 474L671.00 726.00A252.00 252.00 0 0 1 492.81 652.19Z" fill="#5c6473"/>
<path d="M671 474L492.81 652.19A252.00 252.00 0 0 1 419.00 474.00Z" fill="#7a8591"/>
<path d="M671 474L419.00 474.00A252.00 252.00 0 0 1 492.81 295.81Z" fill="#5c6473"/>
<path d="M671 474L492.81 295.81A252.00 252.00 0 0 1 671.00 222.00Z" fill="#7a8591"/>
<text x="386.9" y="755.2" font-family="Liberation Sans,sans-serif" font-size="32" letter-spacing="2.2" fill="#514a60">!b</text>
<g stroke="#2c1933" stroke-width="7.6" fill="none">
<path d="M671 175V774M371 474H971M371 175L971 774M971 175L371 774"/>
<ellipse cx="671" cy="474" rx="253.3" ry="254.3" stroke-width="6.4"/>
</g>
</g>
<g fill="none" stroke="#3580dc" stroke-width=".95">
<ellipse cx="671" cy="474" rx="256.5" ry="257.5"/>
<ellipse cx="671" cy="474" rx="250.1" ry="251.1"/>
<rect x="414.5" y="216.5" width="513" height="515"/>
<path d="M670.6 186V216.5" stroke="#2f64b0"/>
</g>
<use href="#h" x="414.5" y="216.5"/><use href="#h" x="670.5" y="216.5"/><use href="#h" x="927.5" y="216.5"/>
<use href="#h" x="414.5" y="473.5"/><use href="#h" x="927.5" y="473.5"/>
<use href="#h" x="414.5" y="731.5"/><use href="#h" x="670.5" y="731.5"/><use href="#h" x="927.5" y="731.5"/>
<circle cx="670.5" cy="186.4" r="5.2" fill="#2f7fde"/><circle cx="670.5" cy="186.4" r="3.7" fill="#f4f6fa"/>
</svg>
</div>

<!-- ===== right panel ===== -->
<div id="rp" style="left:1177px;top:87px;width:264px;height:691px;background:#2c2c2c;overflow:hidden">
<!-- color panel -->
<div class="tabbar" style="left:0;top:0;width:264px;height:21px"></div>
<div class="grip" style="left:6px;top:5px"></div>
<div class="tab" style="left:19px;top:1px;width:32px;height:20px"><span class="tt on" style="left:3px;top:3px">Color</span></div>
<span class="tt" style="left:67px;top:4px">Swt</span>
<span class="tt" style="left:108px;top:4px">Stroke</span>
<span class="tt" style="left:152px;top:4px">Brushes</span>
<span class="tt" style="left:211px;top:4px">Apr</span>
<div class="tsep" style="left:99.5px;top:5px"></div>
<div class="tsep" style="left:147.5px;top:5px"></div>
<div class="tsep" style="left:196px;top:5px"></div>
<div class="pmenu" style="left:248px;top:6px"></div>
<div class="pbody" style="left:0;top:21px;width:264px;height:209px"></div>
<div style="left:9.5px;top:27.5px;width:27px;height:27px;border-radius:50%;background:#000;border:1px solid #6c6c6c"></div>
<div style="left:16px;top:34px;width:14px;height:14px;border-radius:50%;background:#404040;border:1px solid #727272"></div>
<div style="left:19.5px;top:39px;width:27px;height:27px;border-radius:50%;background:#2b1933;border:1px solid #6a6a6a"></div>
<svg style="left:8px;top:57px" width="11" height="11" viewBox="0 0 11 11"><circle cx="5.5" cy="5.5" r="5" fill="#fff" stroke="#222" stroke-width=".8"/><path d="M2.2 8.8L8.8 2.2" stroke="#e0222a" stroke-width="1.5"/></svg>
<svg style="left:36px;top:27px" width="14" height="14" viewBox="0 0 14 14" fill="none" stroke="#ddd" stroke-width="1.1"><path d="M2 3.5C6.5 2.5 10.5 5.5 10.7 11"/><path d="M4.5 1L1.7 3.6L5 5.5M8.5 9L10.8 11.6L12.7 8.7"/></svg>
<svg style="left:57px;top:29px" width="17" height="17" viewBox="0 0 17 17"><path d="M1 16L2 13L8 7L10 9L4 15Z" fill="#9a9a9a"/><path d="M1 16L2.2 13.2L5 16Z" fill="#ccc"/><rect x="7.2" y="5.2" width="6" height="3" transform="rotate(45 10 6.5)" fill="#8a5a25"/><circle cx="12.3" cy="4.3" r="3.3" fill="#d89236"/><circle cx="13" cy="3.5" r="1.3" fill="#f0b868"/></svg>
<div style="left:75px;top:30px;width:14.5px;height:14.5px;border-radius:50%;background:#000;border:1px solid #555"></div>
<div style="left:62.6px;top:41.5px;width:153.4px;height:153.4px;border-radius:50%;background:conic-gradient(from 90deg,#f00,#ff0,#0f0,#0ff,#00f,#f0f,#f00);-webkit-mask:radial-gradient(circle,transparent 60.6px,#000 61.3px,#000 76.2px,transparent 76.9px);mask:radial-gradient(circle,transparent 60.6px,#000 61.3px,#000 76.2px,transparent 76.9px)"></div>
<svg style="left:68px;top:46px;isolation:isolate" width="140" height="140" viewBox="1300 170 140 140">
<defs><linearGradient id="tgh" gradientUnits="userSpaceOnUse" x1="1363.5" y1="273.05" x2="1391.4" y2="184"><stop offset="0" stop-color="#c800ff" stop-opacity="0"/><stop offset="1" stop-color="#c800ff"/></linearGradient>
<linearGradient id="tgw" gradientUnits="userSpaceOnUse" x1="1351.6" y1="219.9" x2="1413.8" y2="288.8"><stop offset="0" stop-color="#fff" stop-opacity="0"/><stop offset="1" stop-color="#fff"/></linearGradient></defs>
<g style="isolation:isolate">
<path d="M1391.4 184L1311 256.6L1413.8 288.8Z" fill="#000"/>
<path d="M1391.4 184L1311 256.6L1413.8 288.8Z" fill="url(#tgh)" style="mix-blend-mode:plus-lighter"/>
<path d="M1391.4 184L1311 256.6L1413.8 288.8Z" fill="url(#tgw)" style="mix-blend-mode:plus-lighter"/>
</g>
<circle cx="1392.7" cy="175.9" r="4.3" fill="none" stroke="#fff" stroke-width="1.4"/>
<circle cx="1328" cy="251.9" r="4" fill="none" stroke="#fff" stroke-width="1.4"/>
</svg>
<span class="lbl" style="left:8.5px;top:146.9px;color:#dcdcdc">H: 287</span>
<span class="lbl" style="left:9.5px;top:159.9px;color:#dcdcdc">S: 32</span>
<span class="lbl" style="left:10.5px;top:172.9px;color:#dcdcdc">L: 15</span>
<span class="lbl" style="left:8px;top:189.9px;color:#dcdcdc">Opacity</span>
<div style="left:9.2px;top:208.5px;width:12.6px;height:12.6px;border-radius:50%;background:#2b1933"></div>
<div class="oslider" style="left:28.5px;top:210.3px;width:158px;height:8.4px"></div>
<div style="left:177.2px;top:208.7px;width:11px;height:11px;border-radius:50%;background:#222;border:1.8px solid #fff"></div>
<div class="fld" style="left:198px;top:204px;width:61px;height:21px"><span style="left:2.5px;top:2.2px;font-size:11px;letter-spacing:-.3px">100 %</span><div style="left:43px;top:0;width:1px;height:19px;background:#3f3f3f"></div><b style="right:5px;top:8px;border-left-width:3.5px;border-right-width:3.5px;border-top-width:5.5px"></b></div>
<!-- layers panel -->
<div class="tabbar" style="left:0;top:233px;width:264px;height:22px"></div>
<div class="grip" style="left:6px;top:239px"></div>
<div class="tab" style="left:19px;top:234px;width:38px;height:21px"><span class="tt on" style="left:3px;top:4px">Layers</span></div>
<span class="tt" style="left:62px;top:238px">Effects</span>
<span class="tt" style="left:104px;top:238px">Styles</span>
<span class="tt" style="left:142.5px;top:238px">Text Styles</span>
<span class="tt" style="left:203px;top:238px">Stock</span>
<div class="tsep" style="left:100px;top:239px"></div>
<div class="tsep" style="left:138px;top:239px"></div>
<div class="tsep" style="left:199px;top:239px"></div>
<div class="pmenu" style="left:248px;top:240px"></div>
<div class="pbody" style="left:0;top:255px;width:264px;height:29px"></div>
<span class="lbl" style="left:5.5px;top:262.2px;color:#dcdcdc">Opacity:</span>
<div class="fld" style="left:60.5px;top:260.5px;width:48.5px;height:20px"><span style="left:3px;top:2.2px;font-size:11.5px;letter-spacing:-.4px">100 %</span><b style="right:4px;top:7.5px"></b></div>
<div class="fld" style="left:111.5px;top:260.5px;width:108px;height:20px;background:#333"><span style="left:4px;top:1.8px;font-size:11.5px">Normal</span><svg style="left:97px;top:4px" width="6" height="11" viewBox="0 0 6 11" fill="#ddd"><path d="M3 0L5.2 3.2H.8ZM3 11L5.2 7.8H.8Z"/></svg></div>
<svg id="gear2" style="left:224px;top:263.2px" width="12" height="12" viewBox="-6.5 -6.5 13 13"><use href="#gear" fill="#d8d8d8"/></svg>
<svg style="left:245px;top:264px" width="10" height="12" viewBox="0 0 10 13"><path d="M2.3 6V3.8a2.7 2.7 0 0 1 5.4 0V6" fill="none" stroke="#bdbdbd" stroke-width="1.5"/><rect x=".8" y="5.6" width="8.4" height="6.6" rx=".8" fill="#bdbdbd"/></svg>
<div id="list" style="left:0;top:284px;width:264px;height:260.5px;background:#2f2f2f;overflow:hidden">
<div style="left:0;top:0;width:249px;height:261px;background:#363636"></div><div style="left:0;top:0;width:249px;height:11px;background:#3a3f47"></div>
<div class="thumb" style="left:21px;top:-20px"><svg width="28" height="28" viewBox="-14 -14 28 28"><use href="#pin" /></svg></div>
<div class="disc" style="left:4.5px;top:-10.5px;width:13px;height:13px;background:none;border:1.3px solid #ececec"></div>
<div class="rsep" style="top:11px"></div>
<div style="left:0;top:11.7px;width:249px;height:32.3px;background:#3f648f"></div>
<div class="thumb" style="left:31px;top:12.9px"></div>
<span class="ln" style="left:66.3px;top:20.0px"><b>CircularBorder</b> <span style="color:#d5dce8">(Donut)</span></span>
<div class="cb sel" style="left:218.3px;top:19.9px"><svg width=13 height=13 viewBox="0 0 13 13"><path d="M3.2 6.8L5.6 9.6L9.8 2.8" fill="none" stroke="#fff" stroke-width="1.8"/></svg></div>
<div class="thumb" style="left:31px;top:45.9px"><svg width="28" height="28" viewBox="-14 -14 28 28"><path d="M0 0L0.0 -13.5A13.5 13.5 0 0 1 9.5 -9.5Z" fill="#5f6a80"/><path d="M0 0L13.5 -0.0A13.5 13.5 0 0 1 9.5 9.5Z" fill="#5f6a80"/><path d="M0 0L0.0 13.5A13.5 13.5 0 0 1 -9.5 9.5Z" fill="#5f6a80"/><path d="M0 0L-13.5 0.0A13.5 13.5 0 0 1 -9.5 -9.5Z" fill="#5f6a80"/></svg></div>
<span class="ln" style="left:66.3px;top:53.0px"><b>DarkerPies</b> <span>(Group)</span></span>
<div class="cb" style="left:218.3px;top:52.9px"><svg width=13 height=13 viewBox="0 0 13 13"><path d="M3.2 6.8L5.6 9.6L9.8 2.8" fill="none" stroke="#fff" stroke-width="1.8"/></svg></div>
<div class="disc down" style="left:13.8px;top:54.4px"></div>
<div class="rsep" style="top:77.4px"></div>
<div class="thumb" style="left:41px;top:78.9px"><svg width="28" height="28" viewBox="-14 -14 28 28"><path d="M0 -2L-1.3 -13.5H1.3Z" transform="rotate(4)" fill="#5c6486"/><path d="M0 -2L-1.3 -13.5H1.3Z" transform="rotate(49)" fill="#5c6486"/><path d="M0 -2L-1.3 -13.5H1.3Z" transform="rotate(94)" fill="#5c6486"/><path d="M0 -2L-1.3 -13.5H1.3Z" transform="rotate(139)" fill="#5c6486"/><path d="M0 -2L-1.3 -13.5H1.3Z" transform="rotate(184)" fill="#5c6486"/><path d="M0 -2L-1.3 -13.5H1.3Z" transform="rotate(229)" fill="#5c6486"/><path d="M0 -2L-1.3 -13.5H1.3Z" transform="rotate(274)" fill="#5c6486"/><path d="M0 -2L-1.3 -13.5H1.3Z" transform="rotate(319)" fill="#5c6486"/></svg></div>
<span class="ln" style="left:76.3px;top:86.0px"><b>Shading</b> <span>(Group)</span></span>
<div class="cb" style="left:218.3px;top:85.9px"></div>
<div class="disc right" style="left:23.8px;top:87.4px"></div>
<div class="rsep" style="top:110.4px"></div>
<div class="thumb" style="left:41px;top:111.9px"><svg width="28" height="28" viewBox="-14 -14 28 28"><path d="M0 0L0.0 13.5A13.5 13.5 0 0 1 -9.5 9.5Z" fill="#5f6a80"/></svg></div>
<span class="ln" style="left:76.3px;top:119.0px"><b>Bottom4</b> <span>(Pie)</span></span>
<div class="cb" style="left:218.3px;top:118.9px"><svg width=13 height=13 viewBox="0 0 13 13"><path d="M3.2 6.8L5.6 9.6L9.8 2.8" fill="none" stroke="#fff" stroke-width="1.8"/></svg></div>
<div class="rsep" style="top:143.4px"></div>
<div class="thumb" style="left:41px;top:144.9px"><svg width="28" height="28" viewBox="-14 -14 28 28"><path d="M0 0L-13.5 0.0A13.5 13.5 0 0 1 -9.5 -9.5Z" fill="#5f6a80"/></svg></div>
<span class="ln" style="left:76.3px;top:152.0px"><b>Bottom2</b> <span>(Pie)</span></span>
<div class="cb" style="left:218.3px;top:151.9px"><svg width=13 height=13 viewBox="0 0 13 13"><path d="M3.2 6.8L5.6 9.6L9.8 2.8" fill="none" stroke="#fff" stroke-width="1.8"/></svg></div>
<div class="rsep" style="top:176.4px"></div>
<div class="thumb" style="left:41px;top:177.9px"><svg width="28" height="28" viewBox="-14 -14 28 28"><path d="M0 0L13.5 -0.0A13.5 13.5 0 0 1 9.5 9.5Z" fill="#5f6a80"/></svg></div>
<span class="ln" style="left:76.3px;top:185.0px"><b>Top3</b> <span>(Pie)</span></span>
<div class="cb" style="left:218.3px;top:184.9px"><svg width=13 height=13 viewBox="0 0 13 13"><path d="M3.2 6.8L5.6 9.6L9.8 2.8" fill="none" stroke="#fff" stroke-width="1.8"/></svg></div>
<div class="rsep" style="top:209.4px"></div>
<div class="thumb" style="left:41px;top:210.9px"><svg width="28" height="28" viewBox="-14 -14 28 28"><path d="M0 0L0.0 -13.5A13.5 13.5 0 0 1 9.5 -9.5Z" fill="#5f6a80"/></svg></div>
<span class="ln" style="left:76.3px;top:218.0px"><b>Top1</b> <span>(Pie)</span></span>
<div class="cb" style="left:218.3px;top:217.9px"><svg width=13 height=13 viewBox="0 0 13 13"><path d="M3.2 6.8L5.6 9.6L9.8 2.8" fill="none" stroke="#fff" stroke-width="1.8"/></svg></div>
<div class="rsep" style="top:242.4px"></div>
<div class="thumb" style="left:31px;top:243.9px"><svg width="28" height="28" viewBox="-14 -14 28 28"><path d="M0 0L9.5 -9.5A13.5 13.5 0 0 1 13.5 -0.0Z" fill="#7a8799"/><path d="M0 0L9.5 9.5A13.5 13.5 0 0 1 0.0 13.5Z" fill="#7a8799"/><path d="M0 0L-9.5 9.5A13.5 13.5 0 0 1 -13.5 0.0Z" fill="#7a8799"/><path d="M0 0L-9.5 -9.5A13.5 13.5 0 0 1 -0.0 -13.5Z" fill="#7a8799"/></svg></div>
<span class="ln" style="left:66.3px;top:251.0px"><b>LighterPies</b> <span>(Group)</span></span>
<div class="cb" style="left:218.3px;top:250.9px"><svg width=13 height=13 viewBox="0 0 13 13"><path d="M3.2 6.8L5.6 9.6L9.8 2.8" fill="none" stroke="#fff" stroke-width="1.8"/></svg></div>
<div class="disc down" style="left:13.8px;top:252.4px"></div>
<div class="rsep" style="top:275.4px"></div>
<div style="left:253.2px;top:64.4px;width:7.6px;height:97.5px;border-radius:4px;background:#5b5b5b"></div>
</div>
<div class="pbody" style="left:0;top:544.5px;width:264px;height:23.5px;border-top:1px solid #4a4a4a"></div>
<div style="left:4px;top:546.5px;width:22px;height:19.5px;background:#383838"></div>
<svg style="left:7px;top:549px" width="16" height="14" viewBox="0 0 16 14" fill="none" stroke="#cfcfcf" stroke-width="1.3"><path d="M.8 1.2L8 4.8L15.2 1.2M.8 4.8L8 8.4L15.2 4.8M.8 8.4L8 12L15.2 8.4"/></svg>
<svg style="left:83px;top:550.3px" width="14.5" height="11.5" viewBox="0 0 14.5 11.5"><rect width="14.5" height="11.5" fill="#bfbfbf"/><circle cx="7.2" cy="5.8" r="3.9" fill="#3a3a3a"/></svg>
<svg style="left:106.7px;top:549.6px" width="12.6" height="12.6" viewBox="-6.3 -6.3 12.6 12.6"><circle r="5.6" fill="none" stroke="#c4c4c4" stroke-width="1.2"/><path d="M3.96 -3.96A5.6 5.6 0 0 1 -3.96 3.96Z" fill="#c4c4c4"/></svg>
<span style="left:127.5px;top:546px;font-family:'Liberation Serif',serif;font-style:italic;font-weight:bold;font-size:14px;line-height:18px;color:#c4c4c4;letter-spacing:-.3px">fx</span>
<svg style="left:200px;top:550px" width="10.5" height="12.5" viewBox="0 0 10.5 12.5" fill="none" stroke="#cfcfcf" stroke-width="1.2"><path d="M.6 .6H6.2L9.9 4.3V11.9H.6ZM6.2 .6V4.3H9.9"/></svg>
<svg style="left:222.8px;top:550.3px" width="10.5" height="11.5" viewBox="-.25 -.75 10.5 11.5"><rect x="-.25" y="-.75" width="10.5" height="11.5" fill="#d0d0d0"/><rect x="0" y="0" width="2" height="2" fill="#d0d0d0"/><rect x="0" y="2" width="2" height="2" fill="#444"/><rect x="0" y="4" width="2" height="2" fill="#d0d0d0"/><rect x="0" y="6" width="2" height="2" fill="#444"/><rect x="0" y="8" width="2" height="2" fill="#d0d0d0"/><rect x="2" y="0" width="2" height="2" fill="#444"/><rect x="2" y="2" width="2" height="2" fill="#d0d0d0"/><rect x="2" y="4" width="2" height="2" fill="#444"/><rect x="2" y="6" width="2" height="2" fill="#d0d0d0"/><rect x="2" y="8" width="2" height="2" fill="#444"/><rect x="4" y="0" width="2" height="2" fill="#d0d0d0"/><rect x="4" y="2" width="2" height="2" fill="#444"/><rect x="4" y="4" width="2" height="2" fill="#d0d0d0"/><rect x="4" y="6" width="2" height="2" fill="#444"/><rect x="4" y="8" width="2" height="2" fill="#d0d0d0"/><rect x="6" y="0" width="2" height="2" fill="#444"/><rect x="6" y="2" width="2" height="2" fill="#d0d0d0"/><rect x="6" y="4" width="2" height="2" fill="#444"/><rect x="6" y="6" width="2" height="2" fill="#d0d0d0"/><rect x="6" y="8" width="2" height="2" fill="#444"/><rect x="8" y="0" width="2" height="2" fill="#d0d0d0"/><rect x="8" y="2" width="2" height="2" fill="#444"/><rect x="8" y="4" width="2" height="2" fill="#d0d0d0"/><rect x="8" y="6" width="2" height="2" fill="#444"/><rect x="8" y="8" width="2" height="2" fill="#d0d0d0"/></svg>
<svg style="left:246px;top:549px" width="10" height="13.5" viewBox="0 0 10 13.5" fill="none" stroke="#cfcfcf" stroke-width="1.2"><path d="M0 2.6H10M3.3 2.4V.7H6.7V2.4M1.2 4.2V12.6H8.8V4.2M3.6 5V11.5M6.4 5V11.5" /></svg>
<!-- transform panel -->
<div class="tabbar" style="left:0;top:569px;width:264px;height:21.5px"></div>
<div class="grip" style="left:6px;top:575px"></div>
<div class="tab" style="left:19px;top:570px;width:55px;height:20.5px"><span class="tt on" style="left:3px;top:4px">Transform</span></div>
<span class="tt" style="left:79px;top:574px">History</span>
<span class="tt" style="left:122px;top:574px">Navigator</span>
<div class="tsep" style="left:117.5px;top:575px"></div>
<div class="pbody" style="left:0;top:590.5px;width:264px;height:100px"></div>
<div style="left:20px;top:614px;width:34px;height:33.5px;background:#5f5f5f"></div>
<div style="left:17.3px;top:627.6px;width:5.5px;height:5.5px;background:#b8b8b8"></div>
<div style="left:17.3px;top:643.9px;width:5.5px;height:5.5px;background:#b8b8b8"></div>
<div style="left:33.8px;top:611.3px;width:5.5px;height:5.5px;background:#b8b8b8"></div>
<div style="left:33.8px;top:627.6px;width:5.5px;height:5.5px;background:#b8b8b8"></div>
<div style="left:33.8px;top:643.9px;width:5.5px;height:5.5px;background:#b8b8b8"></div>
<div style="left:50.3px;top:611.3px;width:5.5px;height:5.5px;background:#b8b8b8"></div>
<div style="left:50.3px;top:627.6px;width:5.5px;height:5.5px;background:#b8b8b8"></div>
<div style="left:50.3px;top:643.9px;width:5.5px;height:5.5px;background:#b8b8b8"></div>
<div style="left:15px;top:609.3px;width:10.5px;height:10px;background:#fff"></div>
<span class="lbl" style="left:74px;top:603.9px;color:#dcdcdc">X:</span>
<div class="fld" style="left:87px;top:601.4px;width:60px;height:18.5px;border-radius:4px"><span style="left:2px;top:2px;font-size:11px;letter-spacing:-.3px">0.614 in</span></div>
<span class="lbl" style="left:155.5px;top:603.9px;color:#dcdcdc">W:</span>
<div class="fld" style="left:171px;top:601.4px;width:60px;height:18.5px;border-radius:4px"><span style="left:2px;top:2px;font-size:11px;letter-spacing:-.3px">7.27 in</span></div>
<span class="lbl" style="left:75px;top:625.9px;color:#dcdcdc">Y:</span>
<div class="fld" style="left:87px;top:623.4px;width:60px;height:18.5px;border-radius:4px"><span style="left:2px;top:2px;font-size:11px;letter-spacing:-.3px">0.596 in</span></div>
<span class="lbl" style="left:157px;top:625.9px;color:#dcdcdc">H:</span>
<div class="fld" style="left:171px;top:623.4px;width:60px;height:18.5px;border-radius:4px"><span style="left:2px;top:2px;font-size:11px;letter-spacing:-.3px">7.298 in</span></div>
<span class="lbl" style="left:74px;top:657.8px;color:#dcdcdc">R:</span>
<div class="fld" style="left:87px;top:655.3px;width:60px;height:18.5px;border-radius:4px"><span style="left:2px;top:2px;font-size:11px;letter-spacing:-.3px">0 °</span><b style="right:2.5px;top:6.5px"></b></div>
<span class="lbl" style="left:158px;top:657.8px;color:#dcdcdc">S:</span>
<div class="fld" style="left:171px;top:655.3px;width:60px;height:18.5px;border-radius:4px"><span style="left:2px;top:2px;font-size:11px;letter-spacing:-.3px">0 °</span><b style="right:2.5px;top:6.5px"></b></div>
<svg style="left:241px;top:615px" width="5.2" height="13.5" viewBox="0 0 6 15" fill="none" stroke="#a8a8a8" stroke-width="1.1"><rect x="1" y=".8" width="4" height="5.4" rx="2"/><rect x="1" y="8.8" width="4" height="5.4" rx="2"/><path d="M3 4.5V10.5"/></svg>
</div>

<!-- ===== status ===== -->
<span class="lbl" style="left:22px;top:781px;color:#d0d0d0">'CircularBorder' selected. <b style="position:static;color:#fff">Drag</b> to move selection. <b style="position:static;color:#fff">Click</b> another object to select it. <b style="position:static;color:#fff">Click</b> on an empty area to deselect selection.</span>
</div>
</body>
</html>
